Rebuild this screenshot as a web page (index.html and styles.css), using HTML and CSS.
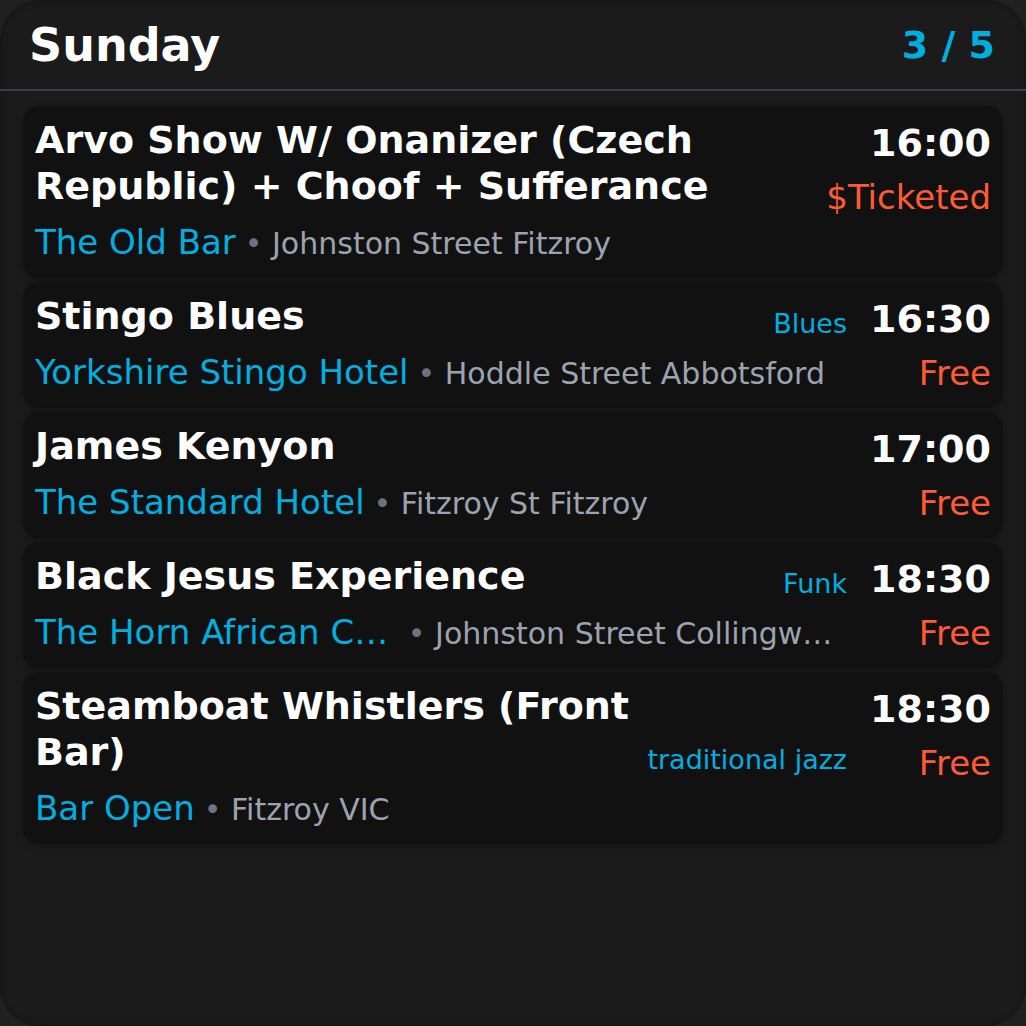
FILE: index.html
```html
<!DOCTYPE html>
<html lang="en">
<head>
<meta charset="utf-8">
<title>Sunday</title>
<link rel="stylesheet" href="styles.css">
</head>
<body>
<div class="widget">
  <header class="header">
    <h1 class="day">Sunday</h1>
    <div class="pager">3 / 5</div>
  </header>
  <div class="list">
    <div class="card">
      <div class="main">
        <div class="title-row">
          <div class="title">Arvo Show W/ Onanizer (Czech Republic) + Choof + Sufferance</div>
        </div>
        <div class="venue-row">
          <span class="venue">The Old Bar</span>
          <span class="addr"><span class="dot">•</span> Johnston Street Fitzroy</span>
        </div>
      </div>
      <div class="side">
        <div class="time">16:00</div>
        <div class="price">$Ticketed</div>
      </div>
    </div>
    <div class="card">
      <div class="main">
        <div class="title-row">
          <div class="title">Stingo Blues</div>
          <div class="genre">Blues</div>
        </div>
        <div class="venue-row">
          <span class="venue">Yorkshire Stingo Hotel</span>
          <span class="addr"><span class="dot">•</span> Hoddle Street Abbotsford</span>
        </div>
      </div>
      <div class="side">
        <div class="time">16:30</div>
        <div class="price">Free</div>
      </div>
    </div>
    <div class="card">
      <div class="main">
        <div class="title-row">
          <div class="title">James Kenyon</div>
        </div>
        <div class="venue-row">
          <span class="venue">The Standard Hotel</span>
          <span class="addr"><span class="dot">•</span> Fitzroy St Fitzroy</span>
        </div>
      </div>
      <div class="side">
        <div class="time">17:00</div>
        <div class="price">Free</div>
      </div>
    </div>
    <div class="card">
      <div class="main">
        <div class="title-row">
          <div class="title">Black Jesus Experience</div>
          <div class="genre">Funk</div>
        </div>
        <div class="venue-row">
          <span class="venue">The Horn African Cafe</span>
          <span class="addr"><span class="dot">•</span> Johnston Street Collingwood</span>
        </div>
      </div>
      <div class="side">
        <div class="time">18:30</div>
        <div class="price">Free</div>
      </div>
    </div>
    <div class="card">
      <div class="main">
        <div class="title-row">
          <div class="title">Steamboat Whistlers (Front Bar)</div>
          <div class="genre">traditional jazz</div>
        </div>
        <div class="venue-row">
          <span class="venue">Bar Open</span>
          <span class="addr"><span class="dot">•</span> Fitzroy VIC</span>
        </div>
      </div>
      <div class="side">
        <div class="time">18:30</div>
        <div class="price">Free</div>
      </div>
    </div>
  </div>
</div>
</body>
</html>
```

FILE: styles.css
```css
html, body {
  margin: 0;
  padding: 0;
  background: #202020;
}
body {
  font-family: "DejaVu Sans", "Liberation Sans", sans-serif;
  color: #ffffff;
}
.widget {
  width: 1026px;
  height: 1026px;
  box-sizing: border-box;
  background: #1b1b1b;
  border-radius: 40px;
  box-shadow: inset 0 0 6px rgba(0, 0, 0, 0.35);
  overflow: hidden;
}
.header {
  height: 89px;
  border-bottom: 2px solid #3a3f4b;
  display: flex;
  align-items: center;
  justify-content: space-between;
  padding: 0 31px 0 29px;
}
.day {
  margin: 0;
  font-size: 46px;
  font-weight: bold;
  color: #ffffff;
}
.pager {
  font-size: 38px;
  font-weight: bold;
  color: #00aee0;
}
.list {
  display: flex;
  flex-direction: column;
  gap: 4px;
  padding: 15px 23px 0 23px;
}
.card {
  display: flex;
  align-items: flex-start;
  background: #111111;
  border-radius: 16px;
  padding: 11px 12px 13px 12px;
  box-shadow: 0 3px 10px rgba(0, 0, 0, 0.25);
}
.main {
  flex: 1;
  min-width: 0;
}
.title-row {
  display: flex;
  align-items: flex-end;
}
.title {
  flex: 1;
  min-width: 0;
  font-size: 38px;
  line-height: 46px;
  font-weight: bold;
  color: #ffffff;
}
.genre {
  margin-left: 12px;
  font-size: 27px;
  color: #00aee0;
  white-space: nowrap;
}
.venue-row {
  display: flex;
  align-items: baseline;
  white-space: nowrap;
  margin-top: 12px;
  line-height: 42px;
}
.venue {
  flex: 0 1 auto;
  min-width: 0;
  overflow: hidden;
  text-overflow: ellipsis;
  font-size: 34px;
  color: #00aee0;
}
.addr {
  flex: 0 1 auto;
  min-width: 0;
  overflow: hidden;
  text-overflow: ellipsis;
  margin-left: 9px;
  font-size: 30px;
  color: #9ca3af;
}
.dot {
  color: #6b7280;
}
.side {
  margin-left: 23px;
  text-align: right;
  white-space: nowrap;
}
.time {
  font-size: 38px;
  line-height: 52px;
  font-weight: bold;
  color: #ffffff;
}
.price {
  margin-top: 8px;
  font-size: 34px;
  color: #ff5a36;
}
```
